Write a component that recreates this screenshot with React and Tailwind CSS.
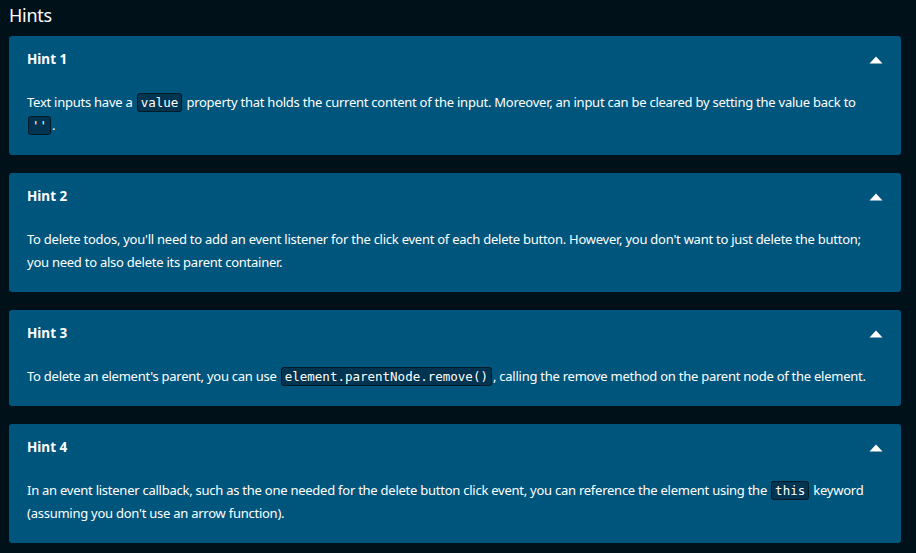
const hints = [
  {
    title: 'Hint 1',
    body: (
      <>
        Text inputs have a <Code>value</Code> property that holds the current content of the input. Moreover, an input can be cleared by setting the value back to <Code>''</Code>.
      </>
    ),
  },
  {
    title: 'Hint 2',
    body: (
      <>
        To delete todos, you'll need to add an event listener for the click event of each delete button. However, you don't want to just delete the button; you need to also delete its parent container.
      </>
    ),
  },
  {
    title: 'Hint 3',
    body: (
      <>
        To delete an element's parent, you can use <Code>element.parentNode.remove()</Code>, calling the remove method on the parent node of the element.
      </>
    ),
  },
  {
    title: 'Hint 4',
    body: (
      <>
        In an event listener callback, such as the one needed for the delete button click event, you can reference the element using the <Code>this</Code> keyword (assuming you don't use an arrow function).
      </>
    ),
  },
];

function Code({ children }) {
  return (
    <code className="mx-[1px] rounded-[3px] border border-[#001a26] bg-[#003450] px-[3px] py-[1px] font-['DejaVu_Sans_Mono',monospace] text-[12.5px] leading-[16px] tracking-[0px] text-white">
      {children}
    </code>
  );
}

const Caret = () => (
  <svg width="14" height="8" viewBox="0 0 14 8" className="mt-[1px]">
    <path d="M7 0.5 L13.5 7.5 L0.5 7.5 Z" fill="white" />
  </svg>
);

export default function App() {
  return (
    <div className="min-h-[553px] bg-[#00111a] px-[9px] pb-[10px] pt-[4px] font-['Noto_Sans',sans-serif] text-white">
      <h2 className="mb-[9px] text-[18px] leading-[23px] tracking-[-0.3px]">Hints</h2>
      <div className="flex w-[892px] flex-col gap-[18px]">
        {hints.map((h) => (
          <div key={h.title} className="rounded-[3px] bg-[#00557d] px-[18px] pb-[18px] pt-[13px]">
            <div className="flex items-center justify-between">
              <h3 className="text-[13.5px] font-bold leading-[20px]">{h.title}</h3>
              <Caret />
            </div>
            <p className="mt-[22px] text-[13px] leading-[23px] tracking-[-0.25px]">{h.body}</p>
          </div>
        ))}
      </div>
    </div>
  );
}
